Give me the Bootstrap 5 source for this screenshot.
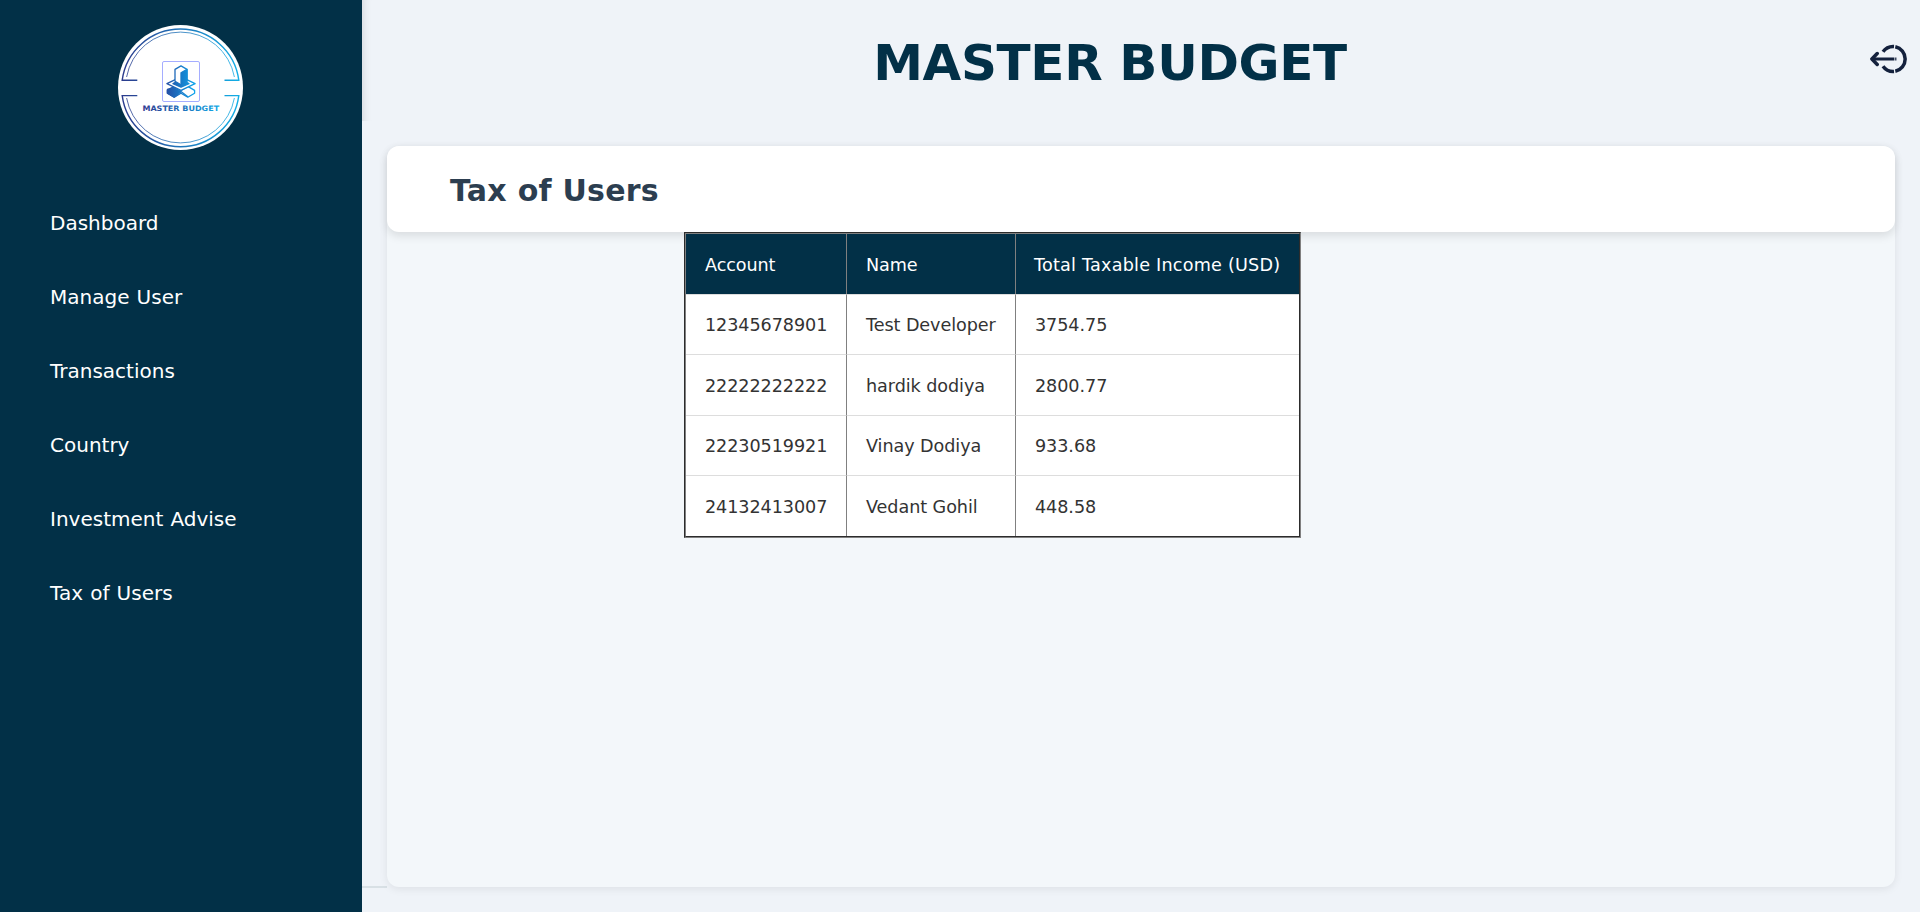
<!DOCTYPE html>
<html lang="en">
<head>
<meta charset="utf-8">
<meta name="viewport" content="width=device-width, initial-scale=1">
<title>Master Budget - Tax of Users</title>
<link href="https://cdn.jsdelivr.net/npm/bootstrap@5.3.0/dist/css/bootstrap.min.css" rel="stylesheet">
<style>
body { font-family: "DejaVu Sans", Verdana, sans-serif; background: #eff3f8; color: #333; }
.side-panel { width: 362px; background: #023047; padding-top: 25px; }
.side-panel .nav { margin-top: 36px; }
.side-panel .nav-link { height: 74px; padding: 0 50px 1px; font-size: 20px; letter-spacing: 0; word-spacing: .8px; color: #fff; display: flex; align-items: center; }
.brand-logo { width: 125px; height: 125px; margin-right: 1px; }
.main-area { padding-bottom: 25px; }
.top-bar { height: 121px; padding: 0 12px 0 24px; box-shadow: inset 9px 0 8px -8px rgba(0,0,0,.12); }
.top-bar h1 { font-size: 50px; font-weight: 700; color: #023047; letter-spacing: -.35px; line-height: 60px; margin: 5px 0 0; padding-right: 36px; }
.log-out { margin-bottom: 3px; }
.content-wrap { padding: 25px 25px 0 0; }
.bottom-rule { width: 25px; height: 2px; margin-bottom: -1px; background: #d8e0e5; }
.panel { background: #f3f7fa; border-radius: 12px; box-shadow: 0 2px 8px rgba(0,0,0,.08); }
.panel-title { height: 86px; border-radius: 12px; padding: 3px 63px 0; box-shadow: 0 4px 10px rgba(0,0,0,.11); }
.panel-title h2 { font-size: 30px; font-weight: 700; color: #2c3e50; letter-spacing: .25px; }
.tax-table { width: 617px; margin-left: 297px; position: relative; border-collapse: separate; border-spacing: 0; border: 2px groove gray; background: #fff; font-size: 17.6px; table-layout: fixed; }
.tax-table th, .tax-table td { height: 60px; padding: 2px 0 0 19px; white-space: nowrap; border-right: 1px solid gray; border-bottom: 1px solid #ddd; letter-spacing: -.07px; }
.tax-table th { height: 61px; background: #023047; color: #fff; font-weight: 400; letter-spacing: -.1px; }
.tax-table tr > :last-child { border-right: 0; padding-left: 18px; }
.tax-table td:last-child { padding-left: 19px; }
.tax-table th:last-child { letter-spacing: .22px; }
.tax-table tbody tr:nth-child(2) td { height: 61px; }
.tax-table tbody tr:last-child td { border-bottom: 0; }
</style>
</head>
<body>
<div class="d-flex vh-100 overflow-hidden">
  <aside class="side-panel flex-shrink-0">
    <div class="d-flex justify-content-center">
      <svg class="brand-logo" viewBox="0 0 125 125">
        <defs>
          <linearGradient id="ring" gradientUnits="userSpaceOnUse" x1="4" y1="0" x2="121" y2="0"><stop stop-color="#2b3a8c"/><stop offset="1" stop-color="#12aee6"/></linearGradient>
          <linearGradient id="mark-fill" gradientUnits="userSpaceOnUse" x1="49" y1="0" x2="78" y2="0"><stop stop-color="#2450a5"/><stop offset="1" stop-color="#0da8ee"/></linearGradient>
          <linearGradient id="word" gradientUnits="userSpaceOnUse" x1="24" y1="0" x2="102" y2="0"><stop stop-color="#2b3990"/><stop offset="1" stop-color="#12a9e6"/></linearGradient>
        </defs>
        <circle cx="62.5" cy="62.5" r="62.5" fill="#fff"/>
        <g fill="none" stroke="url(#ring)">
          <path stroke-width="1.4" d="M19.3 55.2H4.2a58.8 58.8 0 0 1 116.6 0H106.5M19.3 70.6H4.2a58.8 58.8 0 0 0 116.6 0H106.5"/>
          <path stroke-width=".8" d="M8.6 52a54.8 54.8 0 0 1 107.8 0M8.6 73a54.8 54.8 0 0 0 107.8 0"/>
        </g>
        <rect x="44.5" y="36.5" width="37" height="40" rx="1.5" fill="none" stroke="#a5adff" stroke-width="1"/>
        <g stroke="url(#mark-fill)" stroke-width="1.3" stroke-linejoin="round" fill="none">
          <path fill="#fff" d="M49.4 65.4l6.8-4 6.8 4 6.8-4 6.8 4v2.8l-6.8 4-6.8-4-6.8 4-6.8-4z"/>
          <path fill="url(#mark-fill)" d="M49.4 64.4l6.8-2 6.8 4.4-6.8 5.4-6.8-4z"/>
          <path d="M63 66.4l6.8 5.4"/>
          <path fill="#fff" d="M48.9 58.6L63 51.8l14.1 6.8L63 65.4z"/>
          <path fill="url(#mark-fill)" d="M55 58.6l8-4.4 8 4.4-8 3.6z"/>
          <path fill="#fff" d="M57 44.4l6-3.5 6 3.5v11.8l-6 3.5-6-3.5z"/>
          <path fill="url(#mark-fill)" d="M63 47.8l6-3.4v11.8l-6 3.5z"/>
        </g>
        <text x="24.4" y="85.7" font-family="'DejaVu Sans', sans-serif" font-size="7.4" font-weight="700" textLength="76.8" lengthAdjust="spacingAndGlyphs" fill="url(#word)">MASTER BUDGET</text>
      </svg>
    </div>
    <nav class="nav flex-column">
      <a class="nav-link" href="#">Dashboard</a>
      <a class="nav-link" href="#">Manage User</a>
      <a class="nav-link" href="#">Transactions</a>
      <a class="nav-link" href="#">Country</a>
      <a class="nav-link" href="#">Investment Advise</a>
      <a class="nav-link" href="#">Tax of Users</a>
    </nav>
  </aside>
  <div class="main-area flex-grow-1 d-flex flex-column">
    <header class="top-bar d-flex align-items-center">
      <h1 class="flex-grow-1 text-center">MASTER BUDGET</h1>
      <a href="#" aria-label="Log out" class="d-flex log-out">
        <svg width="38" height="30" viewBox="0 0 38 30" fill="none" stroke="#14213d" stroke-width="3.5">
          <path d="M13 7.8A12.5 12.5 0 0 1 24 2.5M25.3 2.7A12.6 12.6 0 0 1 25.3 27.3M24 27.5A12.5 12.5 0 0 1 13 22.2"/>
          <path stroke-linecap="round" stroke-linejoin="round" d="M7.2 9.6L1.9 15l5.3 5.4"/>
          <path stroke-width="3.2" d="M2 15h22.4M25.2 15h1.2"/>
        </svg>
      </a>
    </header>
    <main class="d-flex flex-grow-1 content-wrap">
      <div class="bottom-rule align-self-end"></div>
      <section class="panel flex-grow-1">
        <div class="panel-title bg-white d-flex align-items-center"><h2 class="mb-0">Tax of Users</h2></div>
        <table class="tax-table">
          <colgroup><col style="width:161px"><col style="width:169px"><col></colgroup>
          <thead><tr><th>Account</th><th>Name</th><th>Total Taxable Income (USD)</th></tr></thead>
          <tbody>
            <tr><td>12345678901</td><td>Test Developer</td><td>3754.75</td></tr>
            <tr><td>22222222222</td><td>hardik dodiya</td><td>2800.77</td></tr>
            <tr><td>22230519921</td><td>Vinay Dodiya</td><td>933.68</td></tr>
            <tr><td>24132413007</td><td>Vedant Gohil</td><td>448.58</td></tr>
          </tbody>
        </table>
      </section>
    </main>
  </div>
</div>
<script src="https://cdn.jsdelivr.net/npm/bootstrap@5.3.0/dist/js/bootstrap.bundle.min.js"></script>
</body>
</html>
